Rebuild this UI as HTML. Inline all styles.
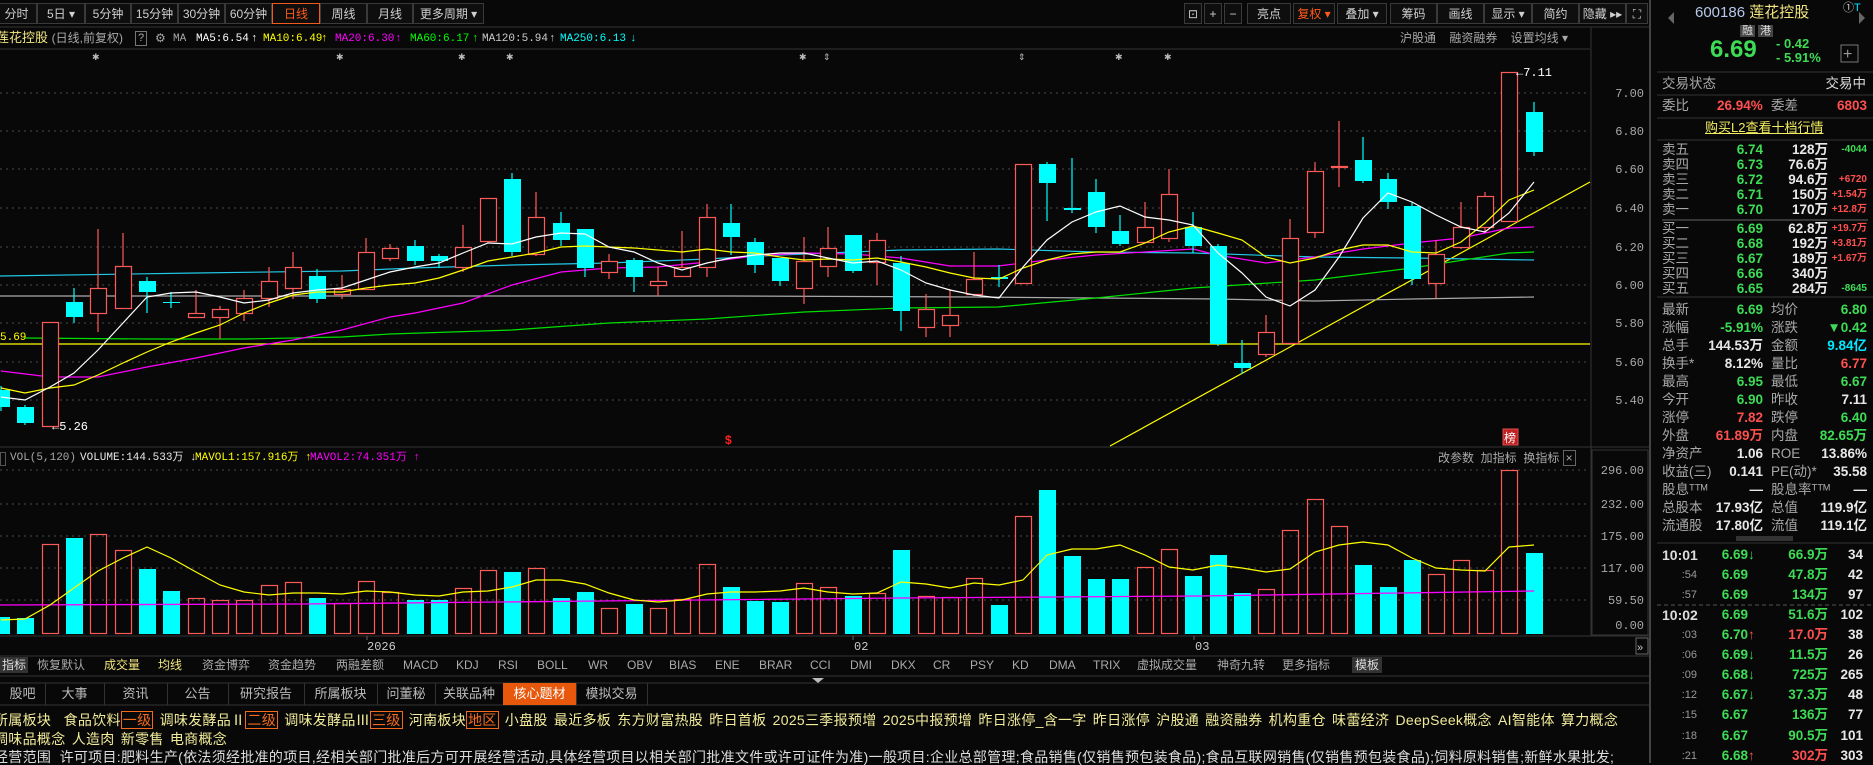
<!DOCTYPE html>
<html><head><meta charset="utf-8"><style>
body{margin:0;width:1873px;height:763px;background:#080808;overflow:hidden;position:relative;font-family:"Liberation Sans","Noto Sans CJK SC",sans-serif;color:#ccc;}
.a{position:absolute;white-space:nowrap;line-height:16px;}
.btn{position:absolute;top:3px;height:21px;border:1px solid #3a3a3a;background:#0e0e0e;color:#cfcfcf;font-size:12px;line-height:21px;text-align:center;box-sizing:border-box;}
.m{font-family:"Liberation Mono","Noto Sans CJK SC",monospace;font-size:12px;}
.g{color:#3ddc55}.r{color:#ff4f4f}.w{color:#e8e8e8}.l{color:#a8a8a8}.y{color:#f2e680}.c{color:#00e8ff}
.rp{font-size:13.5px;font-weight:bold}
.lab{font-size:13.5px;color:#a8a8a8}
.tab{position:absolute;top:683px;height:22px;line-height:22px;font-size:13px;color:#bbb;text-align:center;border-right:1px solid #333;}
.tag{border:1px solid #f26a1b;color:#f26a1b;padding:0 1px;}
.ind{position:absolute;top:657px;font-size:12px;color:#aaa;line-height:16px;white-space:nowrap}
.ma{position:absolute;top:31px;font-family:"Liberation Mono",monospace;font-size:11px;line-height:16px;white-space:nowrap}
</style></head><body>
<svg width="1873" height="763" style="position:absolute;left:0;top:0">
<g stroke="#4a4a4a" stroke-dasharray="2,4" stroke-width="1">
<line x1="0" y1="93" x2="1590" y2="93"/><line x1="0" y1="131" x2="1590" y2="131"/><line x1="0" y1="169" x2="1590" y2="169"/><line x1="0" y1="208" x2="1590" y2="208"/><line x1="0" y1="247" x2="1590" y2="247"/><line x1="0" y1="285" x2="1590" y2="285"/><line x1="0" y1="323" x2="1590" y2="323"/><line x1="0" y1="362" x2="1590" y2="362"/><line x1="0" y1="400" x2="1590" y2="400"/>
<line x1="0" y1="470" x2="1590" y2="470"/><line x1="0" y1="504" x2="1590" y2="504"/><line x1="0" y1="536" x2="1590" y2="536"/><line x1="0" y1="568" x2="1590" y2="568"/><line x1="0" y1="600" x2="1590" y2="600"/>
</g>
<g stroke="#333" fill="none">
<line x1="0" y1="27" x2="1650" y2="27"/><line x1="0" y1="49" x2="1590" y2="49"/>
<line x1="0" y1="447" x2="1650" y2="447"/><line x1="0" y1="636" x2="1650" y2="636"/><line x1="0" y1="656" x2="1650" y2="656"/><line x1="0" y1="676" x2="1650" y2="676"/><line x1="0" y1="683" x2="1650" y2="683"/><line x1="0" y1="705" x2="1650" y2="705"/>
<line x1="1591" y1="27" x2="1591" y2="636"/><line x1="1650" y1="0" x2="1650" y2="763" stroke="#444" stroke-width="2"/>
<rect x="1592" y="450" width="56" height="185" stroke="#333"/>
</g>
<line x1="0" y1="344" x2="1590" y2="344" stroke="#ffff00" stroke-width="1.3"/>
<line x1="1110" y1="446" x2="1590" y2="182" stroke="#ffff00" stroke-width="1.2"/>
<g stroke-width="1.2" fill="none">
<polyline stroke="#aaaaaa" points="0,296 730,296 974,297 1217,299 1315,301 1412,299 1534,297"/>
<polyline stroke="#22c8e8" points="0,276 196,273 342,271 415,268 512,265 609,263 707,259 780,255 901,250 998,249 1096,252 1193,253 1315,257 1412,258 1534,260"/>
<polyline stroke="#00e000" points="25,338 147,339 244,339 342,337 390,334 512,330 609,323 707,319 804,312 901,308 998,307 1096,298 1193,288 1315,280 1412,268 1509,253 1534,252"/>
<polyline stroke="#ff00ff" points="1,371 50,377 98,377 147,367 196,358 244,348 293,340 342,330 390,317 415,313 463,303 512,285 561,272 609,268 658,267 707,262 755,256 804,253 853,254 901,258 950,266 998,266 1047,260 1096,255 1145,252 1193,249 1217,255 1266,263 1315,257 1363,249 1412,243 1461,238 1509,228 1534,227"/>
</g>
<g id="candles"></g>
<g fill="none" stroke-width="1.2">
<polyline id="ma10" stroke="#ffff00"/>
<polyline id="ma5" stroke="#ffffff"/>
</g>
<g id="vol"></g>
<polyline id="vma2" fill="none" stroke="#ff00ff" stroke-width="1.3" points="0,605 300,604 600,601 900,598 1200,596 1534,591"/>
<polyline id="vma1" fill="none" stroke="#ffff00" stroke-width="1.2"/>
<g fill="#bbb" font-size="9">
<text x="92" y="60">✱</text><text x="336" y="60">✱</text><text x="458" y="60">✱</text><text x="506" y="60">✱</text><text x="799" y="60">✱</text><text x="823" y="60">⇕</text><text x="1018" y="60">⇕</text><text x="1115" y="60">✱</text><text x="1164" y="60">✱</text>
</g>
<text x="725" y="444" fill="#ff2020" font-size="12" font-weight="bold">$</text>
<rect x="1503" y="429" width="15" height="16" fill="#c02020" stroke="#e05050"/>
<text x="1504" y="442" fill="#fff" font-size="12" font-family="Noto Sans CJK SC">榜</text>
<text x="1516" y="76" fill="#fff" font-size="12" font-family="Liberation Mono">←7.11</text>
<text x="52" y="430" fill="#fff" font-size="12" font-family="Liberation Mono">←5.26</text>
<text x="0" y="340" fill="#ffff00" font-size="11" font-family="Liberation Mono">5.69</text>
<g fill="#a8a8a8" font-size="12" font-family="Liberation Mono" text-anchor="end">
<text x="1644" y="97">7.00</text><text x="1644" y="135">6.80</text><text x="1644" y="173">6.60</text><text x="1644" y="212">6.40</text><text x="1644" y="251">6.20</text><text x="1644" y="289">6.00</text><text x="1644" y="327">5.80</text><text x="1644" y="366">5.60</text><text x="1644" y="404">5.40</text>
<text x="1644" y="474">296.00</text><text x="1644" y="508">232.00</text><text x="1644" y="540">175.00</text><text x="1644" y="572">117.00</text><text x="1644" y="604">59.50</text><text x="1644" y="629">0.00</text>
</g>
<g fill="#ccc" font-size="12" font-family="Liberation Mono"><text x="367" y="650">2026</text><text x="854" y="650">02</text><text x="1195" y="650">03</text></g>
<g stroke="#666"><line x1="367" y1="636" x2="367" y2="640"/><line x1="853" y1="636" x2="853" y2="640"/><line x1="1194" y1="636" x2="1194" y2="640"/></g>
<rect x="1636" y="638" width="12" height="16" fill="none" stroke="#666"/><text x="1637" y="651" fill="#ccc" font-size="11">»</text>
<polygon points="812,678 824,678 818,683" fill="#bbb"/>
<polygon points="1674,12 1668,18 1674,24" fill="#666"/><polygon points="1859,12 1865,18 1859,24" fill="#666"/>
<g stroke="#333"><line x1="1657" y1="72" x2="1873" y2="72"/><line x1="1657" y1="95" x2="1873" y2="95"/><line x1="1657" y1="118" x2="1873" y2="118"/><line x1="1657" y1="140" x2="1873" y2="140"/><line x1="1662" y1="220" x2="1868" y2="220" stroke="#666"/><line x1="1657" y1="297" x2="1873" y2="297"/><line x1="1657" y1="543" x2="1873" y2="543"/><line x1="1657" y1="605" x2="1873" y2="605" stroke-dasharray="4,3" stroke="#555"/></g>
<rect x="1736" y="536" width="57" height="5" fill="#333"/>
<rect x="1841" y="45" width="17" height="17" fill="none" stroke="#777"/><text x="1843" y="59" fill="#999" font-size="16">+</text>
</svg>
<script>
var X=function(i){return Math.round(1+24.33*i)};
var C=[["c",390,407,386,411],["c",407,423,405,425],["r",322,426,322,427],["c",302,317,288,323],["r",288,313,229,332],["r",266,308,233,308],["c",281,292,277,313],["c",302,303,292,308],["r",313,317,290,317],["r",309,317,306,339],["r",298,313,290,321],["r",281,298,267,307],["r",267,288,252,299],["c",276,299,269,303],["r",289,294,275,299],["r",252,289,238,289],["r",248,258,244,261],["c",246,261,240,265],["c",256,261,254,268],["r",247,267,225,272],["r",198,241,198,243],["c",179,252,173,256],["r",217,254,192,256],["c",223,240,212,246],["c",229,268,229,277],["r",261,272,254,279],["c",260,277,258,292],["r",281,285,267,296],["r",267,276,231,276],["r",217,267,204,277],["c",223,237,204,255],["c",242,265,238,273],["c",258,281,258,286],["r",261,288,237,304],["r",248,266,227,277],["c",235,271,235,273],["r",240,262,233,285],["c",263,311,256,331],["r",309,327,294,337],["r",315,325,289,337],["r",279,294,252,296],["c",277,279,265,287],["r",164,283,164,283],["c",164,183,162,221],["c",208,210,158,213],["c",192,227,179,233],["c",231,244,215,246],["r",227,242,202,242],["r",194,238,169,242],["c",227,246,212,253],["c",246,344,244,346],["c",363,368,340,374],["r",332,354,315,357],["r",238,343,219,343],["r",171,232,162,238],["r",166,167,121,187],["c",160,181,137,183],["c",179,202,173,209],["c",206,279,202,285],["r",254,283,240,298],["r",227,247,202,249],["r",196,227,192,232],["r",72,221,72,221],["c",112,152,102,156]];
var V=[617,618,544,538,534,550,569,591,598,600,600,585,582,598,603,581,592,600,600,588,570,572,568,598,592,608,604,608,599,564,587,601,602,583,587,596,593,550,596,597,578,605,516,490,556,579,579,567,549,576,555,593,589,530,499,526,565,587,560,574,560,570,470,553];
var M5=[397,400,387,373,350,323,297,293,292,297,303,300,293,290,288,280,272,267,263,253,243,244,237,233,234,247,252,263,270,263,258,255,253,253,258,263,261,270,283,290,295,298,267,240,222,212,206,217,220,225,253,273,297,306,290,257,218,193,202,215,227,232,213,182];
var M10=[388,393,388,385,375,363,352,342,333,325,313,303,295,292,292,288,285,283,278,270,261,257,253,247,246,247,248,250,252,249,252,253,257,260,259,260,258,262,267,273,278,279,268,260,254,252,252,243,232,226,233,240,257,263,258,250,245,245,252,253,242,223,200,190];
var VM=[620,619,605,588,571,558,547,558,572,585,592,595,593,593,594,591,592,595,596,592,591,587,580,580,584,593,600,602,600,594,592,592,591,588,592,594,593,582,584,588,583,585,580,555,549,549,545,555,567,570,565,568,572,569,552,545,542,545,558,568,570,571,547,545];
var s="",v="",R="#ff5a5a",Q="#00ffff";
C.forEach(function(d,i){var x=X(i),h=Math.max(d[2]-d[1],1),col=d[0]=="r"?R:Q;
s+='<line x1="'+x+'" y1="'+d[3]+'" x2="'+x+'" y2="'+d[4]+'" stroke="'+col+'" stroke-width="1.2"/>';
s+=d[0]=="r"?'<rect x="'+(x-8)+'.5" y="'+d[1]+'.5" width="16" height="'+h+'" fill="#080808" stroke="'+R+'" stroke-width="1.2"/>':'<rect x="'+(x-8)+'" y="'+d[1]+'" width="17" height="'+h+'" fill="'+Q+'"/>';
var t=V[i];v+=d[0]=="r"?'<rect x="'+(x-8)+'.5" y="'+t+'.5" width="16" height="'+(633-t)+'" fill="none" stroke="'+R+'" stroke-width="1.2"/>':'<rect x="'+(x-8)+'" y="'+t+'" width="17" height="'+(634-t)+'" fill="'+Q+'"/>';});
document.getElementById("candles").innerHTML=s;document.getElementById("vol").innerHTML=v;
function P(a){return a.map(function(y,i){return X(i)+","+y}).join(" ")}
document.getElementById("ma5").setAttribute("points",P(M5));document.getElementById("ma10").setAttribute("points",P(M10));document.getElementById("vma1").setAttribute("points",P(VM));
</script>
<!-- toolbar -->
<div class="btn" style="left:-4px;width:41px">分时</div><div class="btn" style="left:37px;width:48px">5日 ▾</div><div class="btn" style="left:85px;width:46px">5分钟</div><div class="btn" style="left:131px;width:47px">15分钟</div><div class="btn" style="left:178px;width:47px">30分钟</div><div class="btn" style="left:225px;width:47px">60分钟</div><div class="btn" style="left:272px;width:48px;border-color:#f05a1a;color:#ff5a1a">日线</div><div class="btn" style="left:320px;width:47px">周线</div><div class="btn" style="left:367px;width:46px">月线</div><div class="btn" style="left:413px;width:71px">更多周期 ▾</div>
<div class="btn" style="left:1184px;width:18px">⊡</div><div class="btn" style="left:1204px;width:18px">+</div><div class="btn" style="left:1224px;width:18px">−</div><div class="btn" style="left:1247px;width:44px">亮点</div><div class="btn" style="left:1293px;width:42px;color:#ff5a1a">复权 ▾</div><div class="btn" style="left:1337px;width:50px">叠加 ▾</div><div class="btn" style="left:1390px;width:47px">筹码</div><div class="btn" style="left:1437px;width:47px">画线</div><div class="btn" style="left:1484px;width:48px">显示 ▾</div><div class="btn" style="left:1532px;width:47px">简约</div><div class="btn" style="left:1579px;width:47px">隐藏 ▸▸</div><div class="btn" style="left:1626px;width:22px">⛶</div>
<!-- MA row -->
<div class="a" style="left:-4px;top:30px;font-size:13px"><span class="y">莲花控股</span> <span class="l" style="font-size:12px">(日线,前复权)</span></div>
<div class="a l" style="left:135px;top:31px;font-size:11px;border:1px solid #777;line-height:13px;padding:0 2px">?</div>
<div class="a l" style="left:155px;top:30px;font-size:12px">⚙</div>
<div class="ma l" style="left:173px">MA</div>
<div class="ma" style="left:196px;color:#fff">MA5:6.54</div><div class="ma" style="left:251px;color:#fff">↑</div>
<div class="ma" style="left:263px;color:#ff0">MA10:6.49</div><div class="ma" style="left:321px;color:#ff0">↑</div>
<div class="ma" style="left:335px;color:#f0f">MA20:6.30</div><div class="ma" style="left:395px;color:#f0f">↑</div>
<div class="ma" style="left:410px;color:#0f0">MA60:6.17</div><div class="ma" style="left:472px;color:#0f0">↑</div>
<div class="ma" style="left:482px;color:#ccc">MA120:5.94</div><div class="ma" style="left:549px;color:#ccc">↑</div>
<div class="ma" style="left:560px;color:#0ff">MA250:6.13</div><div class="ma" style="left:630px;color:#0ff">↓</div>
<div class="a l" style="left:1400px;top:30px;font-size:12px">沪股通 &nbsp; &nbsp;融资融券 &nbsp; &nbsp;设置均线 ▾</div>
<!-- vol header -->
<div class="a" style="left:0;top:452px;border:1px solid #555;width:4px;height:12px"></div>
<div class="a m l" style="left:10px;top:450px;font-size:11px">VOL(5,120)</div>
<div class="a m w" style="left:80px;top:450px;font-size:11px">VOLUME:144.533万 ↓</div>
<div class="a m" style="left:195px;top:450px;font-size:11px;color:#ff0">MAVOL1:157.916万 ↑</div>
<div class="a m" style="left:310px;top:450px;font-size:11px;color:#f0f">MAVOL2:74.351万 ↑</div>
<div class="a l" style="left:1438px;top:450px;font-size:12px">改参数 &nbsp;加指标 &nbsp;换指标 <span style="border:1px solid #666;padding:0 2px">×</span></div>
<!-- indicators -->
<div class="ind" style="left:0;background:#333;color:#ddd;padding:0 2px">指标</div>
<div class="ind" style="left:37px">恢复默认</div><div class="ind" style="left:104px;color:#f2e680">成交量</div><div class="ind" style="left:158px;color:#f2e680">均线</div><div class="ind" style="left:202px">资金博弈</div><div class="ind" style="left:268px">资金趋势</div><div class="ind" style="left:336px">两融差额</div><div class="ind" style="left:403px">MACD</div><div class="ind" style="left:456px">KDJ</div><div class="ind" style="left:498px">RSI</div><div class="ind" style="left:537px">BOLL</div><div class="ind" style="left:588px">WR</div><div class="ind" style="left:627px">OBV</div><div class="ind" style="left:669px">BIAS</div><div class="ind" style="left:715px">ENE</div><div class="ind" style="left:759px">BRAR</div><div class="ind" style="left:810px">CCI</div><div class="ind" style="left:850px">DMI</div><div class="ind" style="left:891px">DKX</div><div class="ind" style="left:933px">CR</div><div class="ind" style="left:970px">PSY</div><div class="ind" style="left:1012px">KD</div><div class="ind" style="left:1049px">DMA</div><div class="ind" style="left:1093px">TRIX</div><div class="ind" style="left:1137px">虚拟成交量</div><div class="ind" style="left:1217px">神奇九转</div><div class="ind" style="left:1282px">更多指标</div><div class="ind" style="left:1352px;background:#333;color:#ddd;padding:0 3px">模板</div>
<div class="tab" style="left:0;width:45px">股吧</div><div class="tab" style="left:45px;width:59px">大事</div><div class="tab" style="left:104px;width:63px">资讯</div><div class="tab" style="left:167px;width:61px">公告</div><div class="tab" style="left:228px;width:76px">研究报告</div><div class="tab" style="left:304px;width:73px">所属板块</div><div class="tab" style="left:377px;width:58px">问董秘</div><div class="tab" style="left:435px;width:68px">关联品种</div><div class="tab" style="left:503px;width:73px;background:#e8580c;color:#fff">核心题材</div><div class="tab" style="left:576px;width:71px">模拟交易</div>
<div class="a" style="left:-6px;top:712px;font-size:14px;letter-spacing:0.3px;word-spacing:2px;color:#f2ec9a">所属板块 &nbsp;食品饮料<span class="tag">一级</span> 调味发酵品Ⅱ<span class="tag">二级</span> 调味发酵品Ⅲ<span class="tag">三级</span> 河南板块<span class="tag">地区</span> 小盘股 最近多板 东方财富热股 昨日首板 2025三季报预增 2025中报预增 昨日涨停_含一字 昨日涨停 沪股通 融资融券 机构重仓 味蕾经济 DeepSeek概念 AI智能体 算力概念</div>
<div class="a" style="left:-6px;top:731px;font-size:14px;letter-spacing:0.3px;word-spacing:2px;color:#f2ec9a">调味品概念 人造肉 新零售 电商概念</div>
<div class="a" style="left:-6px;top:749px;font-size:14px;letter-spacing:0.3px;color:#ddd">经营范围 &nbsp;许可项目:肥料生产(依法须经批准的项目,经相关部门批准后方可开展经营活动,具体经营项目以相关部门批准文件或许可证件为准)一般项目:企业总部管理;食品销售(仅销售预包装食品);食品互联网销售(仅销售预包装食品);饲料原料销售;新鲜水果批发;</div>
<!-- right panel -->
<div class="a" style="left:1695px;top:5px;font-size:15px"><span style="color:#b8c8e8">600186</span> <span class="y">莲花控股</span></div>
<div class="a" style="left:1843px;top:0;font-size:11px;color:#ccc">①<span class="c">T</span></div>
<div class="a" style="left:1740px;top:23px;font-size:11px;color:#ddd"><span style="background:#444;padding:0 2px">融</span> <span style="background:#444;padding:0 2px">港</span></div>
<div class="a g" style="left:1710px;top:37px;font-size:24px;line-height:26px;font-weight:bold">6.69</div>
<div class="a g" style="left:1776px;top:37px;font-size:13px;font-weight:bold;line-height:14px">- 0.42<br>- 5.91%</div>
<div class="a lab" style="left:1662px;top:76px">交易状态</div><div class="a lab" style="right:7px;top:76px;color:#ddd">交易中</div>
<div class="a lab" style="left:1662px;top:98px">委比</div><div class="a rp r" style="left:1717px;top:98px">26.94%</div><div class="a lab" style="left:1771px;top:98px">委差</div><div class="a rp r" style="right:6px;top:98px">6803</div>
<div class="a" style="left:1705px;top:120px;font-size:13px;color:#f2ec60;text-decoration:underline">购买L2查看十档行情</div>
<div id="ob"></div>
<div id="qt"></div>
<div id="tk"></div>
<script>
var ob=[["卖五","6.74","128万","-4044","g"],["卖四","6.73","76.6万","",""],["卖三","6.72","94.6万","+6720","r"],["卖二","6.71","150万","+1.54万","r"],["卖一","6.70","170万","+12.8万","r"],["买一","6.69","62.8万","+19.7万","r"],["买二","6.68","192万","+3.81万","r"],["买三","6.67","189万","+1.67万","r"],["买四","6.66","340万","",""],["买五","6.65","284万","-8645","g"]];
var h="";ob.forEach(function(o,i){var y=(i<5?142+i*15:221+(i-5)*15);
h+='<div class="a lab" style="left:1662px;top:'+y+'px">'+o[0]+'</div><div class="a rp g" style="right:110px;top:'+y+'px">'+o[1]+'</div><div class="a rp w" style="right:45px;top:'+y+'px">'+o[2]+'</div><div class="a '+o[4]+'" style="right:6px;top:'+y+'px;font-size:10px;font-weight:bold">'+o[3]+'</div>';});
document.getElementById("ob").innerHTML=h;
var q=[["最新","6.69","g","均价","6.80","g"],["涨幅","-5.91%","g","涨跌","▼0.42","g"],["总手","144.53万","w","金额","9.84亿","c"],["换手*","8.12%","w","量比","6.77","r"],["最高","6.95","g","最低","6.67","g"],["今开","6.90","g","昨收","7.11","w"],["涨停","7.82","r","跌停","6.40","g"],["外盘","61.89万","r","内盘","82.65万","g"],["净资产","1.06","w","ROE","13.86%","w"],["收益(三)","0.141","w","PE(动)*","35.58","w"],["股息ᵀᵀᴹ","—","w","股息率ᵀᵀᴹ","—","w"],["总股本","17.93亿","w","总值","119.9亿","w"],["流通股","17.80亿","w","流值","119.1亿","w"]];
h="";q.forEach(function(o,i){var y=302+i*18;
h+='<div class="a lab" style="left:1662px;top:'+y+'px">'+o[0]+'</div><div class="a rp '+o[2]+'" style="right:110px;top:'+y+'px">'+o[1]+'</div><div class="a lab" style="left:1771px;top:'+y+'px">'+o[3]+'</div><div class="a rp '+o[5]+'" style="right:6px;top:'+y+'px">'+o[4]+'</div>';});
document.getElementById("qt").innerHTML=h;
var t=[["10:01","6.69","↓","66.9万","g","34",555],[":54","6.69","","47.8万","g","42",575],[":57","6.69","","134万","g","97",595],["10:02","6.69","","51.6万","g","102",615],[":03","6.70","↑","17.0万","r","38",635],[":06","6.69","↓","11.5万","g","26",655],[":09","6.68","↓","725万","g","265",675],[":12","6.67","↓","37.3万","g","48",695],[":15","6.67","","136万","g","77",715],[":18","6.67","","90.5万","g","101",736],[":21","6.68","↑","302万","r","303",756]];
h="";t.forEach(function(o){var y=o[6]-8,big=o[0].length>3;
h+='<div class="a" style="'+(big?'left:1662px;font-size:14px;font-weight:bold;color:#ddd':'right:176px;font-size:11px;color:#999')+';top:'+y+'px">'+o[0]+'</div><div class="a rp g" style="right:116px;top:'+y+'px">'+o[1]+'<span class="'+(o[2]=="↑"?"r":"g")+'" style="display:inline-block;width:9px">'+o[2]+'</span></div><div class="a rp '+o[4]+'" style="right:45px;top:'+y+'px">'+o[3]+'</div><div class="a rp w" style="right:10px;top:'+y+'px">'+o[5]+'</div>';});
document.getElementById("tk").innerHTML=h;
</script>
</body></html>
